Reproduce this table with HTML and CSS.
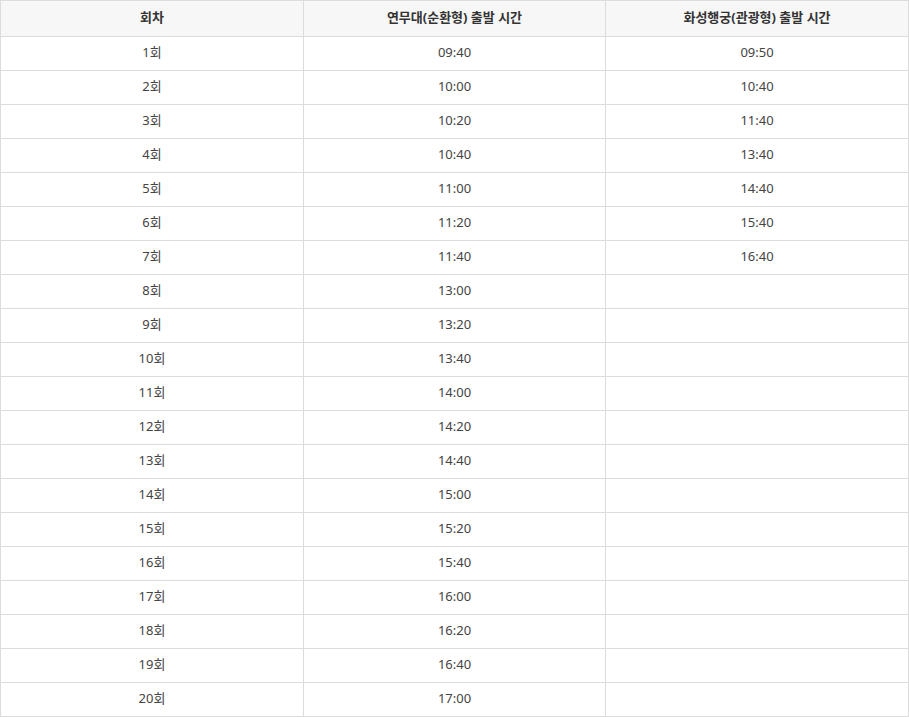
FILE: index.html
```html
<!DOCTYPE html>
<html lang="ko">
<head>
<meta charset="utf-8">
<title>운행 시간표</title>
<link rel="stylesheet" href="styles.css">
</head>
<body>
<table class="timetable">
  <colgroup>
    <col class="c1"><col class="c2"><col class="c3">
  </colgroup>
  <thead>
    <tr><th>회차</th><th>연무대(순환형) 출발 시간</th><th>화성행궁(관광형) 출발 시간</th></tr>
  </thead>
  <tbody>
    <tr><td>1회</td><td>09:40</td><td>09:50</td></tr>
    <tr><td>2회</td><td>10:00</td><td>10:40</td></tr>
    <tr><td>3회</td><td>10:20</td><td>11:40</td></tr>
    <tr><td>4회</td><td>10:40</td><td>13:40</td></tr>
    <tr><td>5회</td><td>11:00</td><td>14:40</td></tr>
    <tr><td>6회</td><td>11:20</td><td>15:40</td></tr>
    <tr><td>7회</td><td>11:40</td><td>16:40</td></tr>
    <tr><td>8회</td><td>13:00</td><td></td></tr>
    <tr><td>9회</td><td>13:20</td><td></td></tr>
    <tr><td>10회</td><td>13:40</td><td></td></tr>
    <tr><td>11회</td><td>14:00</td><td></td></tr>
    <tr><td>12회</td><td>14:20</td><td></td></tr>
    <tr><td>13회</td><td>14:40</td><td></td></tr>
    <tr><td>14회</td><td>15:00</td><td></td></tr>
    <tr><td>15회</td><td>15:20</td><td></td></tr>
    <tr><td>16회</td><td>15:40</td><td></td></tr>
    <tr><td>17회</td><td>16:00</td><td></td></tr>
    <tr><td>18회</td><td>16:20</td><td></td></tr>
    <tr><td>19회</td><td>16:40</td><td></td></tr>
    <tr><td>20회</td><td>17:00</td><td></td></tr>
  </tbody>
</table>
</body>
</html>
```
FILE: styles.css
```css
html, body {
  margin: 0;
  padding: 0;
  background: #fff;
}
body {
  font-family: "Noto Sans", "Noto Sans CJK KR", sans-serif;
  font-size: 13px;
  color: #444;
}
.timetable {
  table-layout: fixed;
  width: 909px;
  border-collapse: separate;
  border-spacing: 1px;
  background: #dcdcdc;
}
.timetable .c1 { width: 302px; }
.timetable .c2 { width: 301px; }
.timetable .c3 { width: 302px; }
.timetable th,
.timetable td {
  text-align: center;
  vertical-align: middle;
  background: #fff;
  line-height: 1;
}
.timetable th {
  height: 33px;
  padding: 0 0 2px;
  background: #f7f7f7;
  color: #333;
  font-weight: bold;
}
.timetable td {
  height: 30px;
  padding: 0 0 3px;
}
```
